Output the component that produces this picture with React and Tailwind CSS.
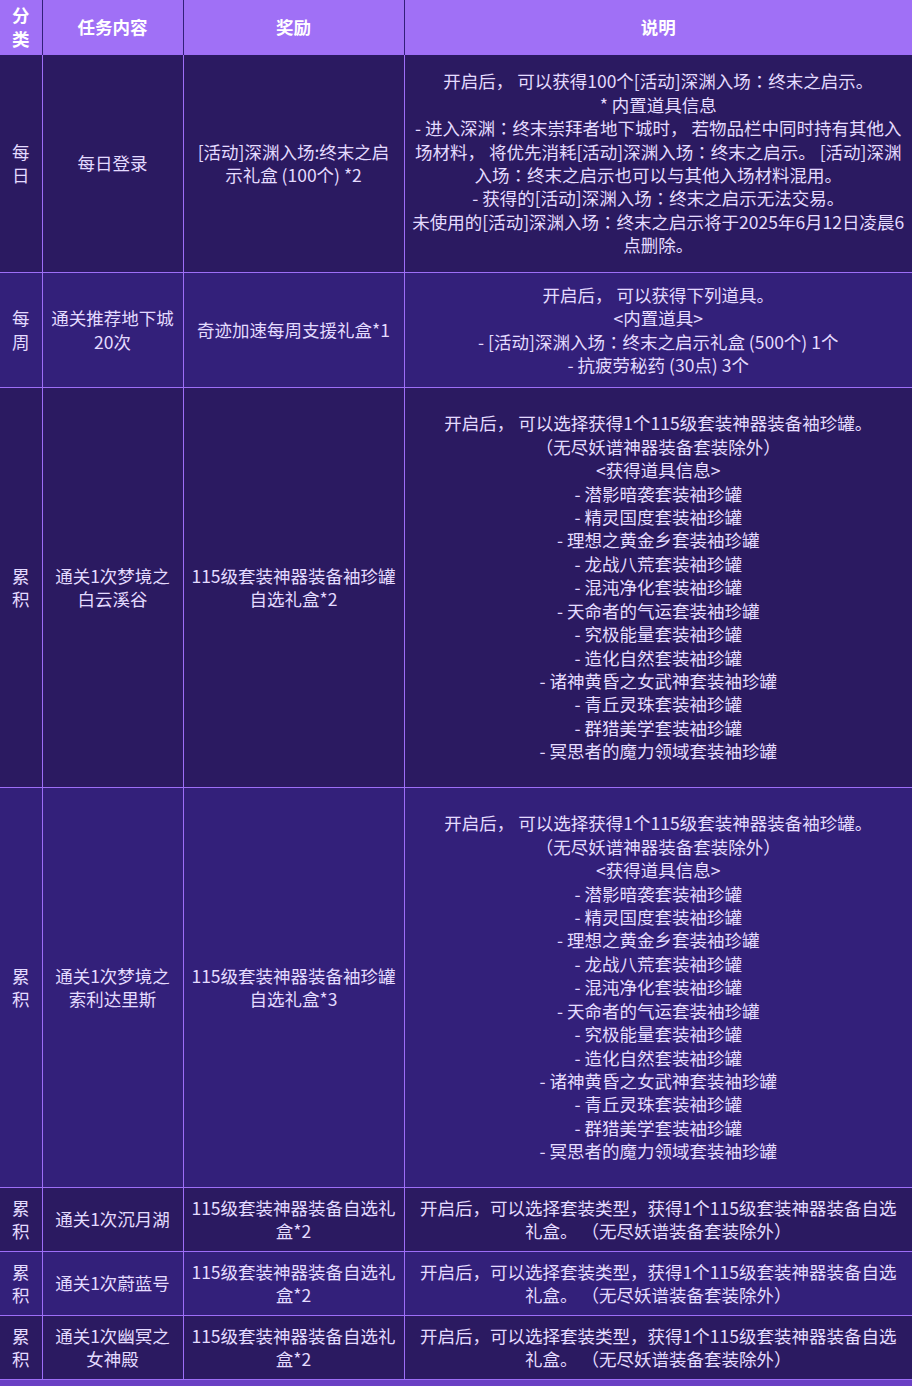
import { Fragment } from "react";

const items = [
  "- 潜影暗袭套装袖珍罐",
  "- 精灵国度套装袖珍罐",
  "- 理想之黄金乡套装袖珍罐",
  "- 龙战八荒套装袖珍罐",
  "- 混沌净化套装袖珍罐",
  "- 天命者的气运套装袖珍罐",
  "- 究极能量套装袖珍罐",
  "- 造化自然套装袖珍罐",
  "- 诸神黄昏之女武神套装袖珍罐",
  "- 青丘灵珠套装袖珍罐",
  "- 群猎美学套装袖珍罐",
  "- 冥思者的魔力领域套装袖珍罐",
];

const jarDesc = [
  "开启后， 可以选择获得1个115级套装神器装备袖珍罐。",
  "（无尽妖谱神器装备套装除外）",
  "<获得道具信息>",
  ...items,
];

const boxDesc = ["开启后，可以选择套装类型，获得1个115级套装神器装备自选礼盒。 （无尽妖谱装备套装除外）"];

const rows = [
  {
    h: "h-[218px]",
    bg: "bg-[#2b1a61]",
    type: "每日",
    task: "每日登录",
    reward: "[活动]深渊入场:终末之启示礼盒 (100个) *2",
    desc: [
      "开启后， 可以获得100个[活动]深渊入场：终末之启示。",
      "* 内置道具信息",
      "- 进入深渊：终末崇拜者地下城时， 若物品栏中同时持有其他入场材料， 将优先消耗[活动]深渊入场：终末之启示。 [活动]深渊入场：终末之启示也可以与其他入场材料混用。",
      "- 获得的[活动]深渊入场：终末之启示无法交易。",
      "未使用的[活动]深渊入场：终末之启示将于2025年6月12日凌晨6点删除。",
    ],
  },
  {
    h: "h-[115px]",
    bg: "bg-[#33207a]",
    type: "每周",
    task: "通关推荐地下城20次",
    reward: "奇迹加速每周支援礼盒*1",
    desc: [
      "开启后， 可以获得下列道具。",
      "<内置道具>",
      "- [活动]深渊入场：终末之启示礼盒 (500个) 1个",
      "- 抗疲劳秘药 (30点) 3个",
    ],
  },
  {
    h: "h-[400px]",
    bg: "bg-[#2b1a61]",
    type: "累积",
    task: "通关1次梦境之白云溪谷",
    reward: "115级套装神器装备袖珍罐自选礼盒*2",
    desc: jarDesc,
  },
  {
    h: "h-[400px]",
    bg: "bg-[#33207a]",
    type: "累积",
    task: "通关1次梦境之索利达里斯",
    reward: "115级套装神器装备袖珍罐自选礼盒*3",
    desc: jarDesc,
  },
  {
    h: "h-[64px]",
    bg: "bg-[#2b1a61]",
    type: "累积",
    task: "通关1次沉月湖",
    reward: "115级套装神器装备自选礼盒*2",
    desc: boxDesc,
  },
  {
    h: "h-[64px]",
    bg: "bg-[#33207a]",
    type: "累积",
    task: "通关1次蔚蓝号",
    reward: "115级套装神器装备自选礼盒*2",
    desc: boxDesc,
  },
  {
    h: "h-[64px]",
    bg: "bg-[#2b1a61]",
    type: "累积",
    task: "通关1次幽冥之女神殿",
    reward: "115级套装神器装备自选礼盒*2",
    desc: boxDesc,
  },
];

// the fullwidth colon sits centred in the original, as in the JP face
function Line({ text }) {
  const parts = text.split("：");
  return (
    <div>
      {parts.map((p, k) => (
        <Fragment key={k}>
          {k > 0 && <span className="font-['Noto_Sans_CJK_JP',sans-serif]">：</span>}
          {p}
        </Fragment>
      ))}
    </div>
  );
}

export default function App() {
  return (
    <div className="min-h-[1386px] w-[912px] bg-[#6a40c4] font-['Noto_Sans_CJK_SC','Noto_Sans',sans-serif] text-[17.5px] leading-[23.4px] text-[#e4dbff]">
      <table className="w-[912px] table-fixed border-collapse text-center">
        <colgroup>
          <col className="w-[42px]" />
          <col className="w-[141px]" />
          <col className="w-[221px]" />
          <col className="w-[508px]" />
        </colgroup>
        <thead>
          <tr className="bg-[#a070f6] font-bold text-white">
            <th className="h-[54px] px-[7px]">分类</th>
            <th className="border-l border-[#33207a] px-[7px]">任务内容</th>
            <th className="border-l border-[#33207a] px-[7px]">奖励</th>
            <th className="border-l border-[#33207a] px-[7px]">说明</th>
          </tr>
        </thead>
        <tbody>
          {rows.map((r, i) => (
            <tr key={i} className={r.bg}>
              <td className={`${r.h} border-y border-[#9d6ef7] px-[7px] align-middle`}>{r.type}</td>
              <td className="border-y border-l border-[#9d6ef7] px-[7px] align-middle">{r.task}</td>
              <td className="border-y border-l border-[#9d6ef7] px-[7px] align-middle">{r.reward}</td>
              <td className="border-y border-l border-[#9d6ef7] px-[7px] align-middle">
                {r.desc.map((line, j) => (
                  <Line key={j} text={line} />
                ))}
              </td>
            </tr>
          ))}
        </tbody>
      </table>
    </div>
  );
}
